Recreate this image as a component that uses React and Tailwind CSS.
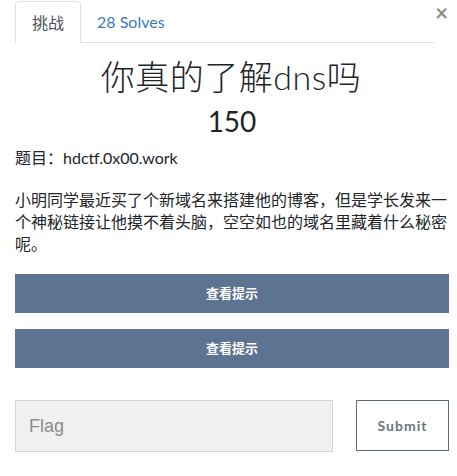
export default function App() {
  const font = { fontFamily: 'Lato, "Noto Sans CJK SC", sans-serif' };
  return (
    <div className="relative w-[457px] h-[476px] bg-white overflow-hidden text-[#212529]" style={font}>
      <button className="absolute right-[9px] top-[3px] text-[22px] leading-[20px] font-bold text-[#8a8a8a]">×</button>
      <div className="flex ml-[15px] mr-[22px] pt-[1px] border-b border-[#dee2e6] h-[43px]">
        <div className="px-[16px] h-[42px] flex items-center border border-b-0 border-[#dee2e6] rounded-t-[4px] bg-white text-[16px] text-[#495057] mb-[-1px]">
          挑战
        </div>
        <div className="px-[16px] h-[42px] flex items-center text-[16px] text-[#3a7bbf]">28 Solves</div>
      </div>
      <div className="pl-[15px] pr-[8px]">
        <h3 className="text-center text-[34px] leading-[38px] mt-[15px] pr-[2px] font-light tracking-[0.5px]">你真的了解dns吗</h3>
        <h4 className="text-center text-[28px] leading-[34px] mt-[8px]">150</h4>
        <p className="text-[16px] leading-[24px] mt-[8px]">题目：hdctf.0x00.work</p>
        <p className="text-[16px] leading-[22px] mt-[19px]">
          小明同学最近买了个新域名来搭建他的博客，但是学长发来一个神秘链接让他摸不着头脑，空空如也的域名里藏着什么秘密呢。
        </p>
        <div className="flex flex-col gap-[16px] mt-[19px]">
          <button className="h-[39px] w-full bg-[#5c7391] text-white text-[13px] font-bold">查看提示</button>
          <button className="h-[39px] w-full bg-[#5c7391] text-white text-[13px] font-bold">查看提示</button>
        </div>
        <div className="flex justify-between mt-[32px]">
          <input
            className="w-[318px] h-[52px] bg-[#f0f0f0] border border-[#d3d3d8] px-[13px] text-[18px] placeholder-[#8c8c8c] outline-none"
            placeholder="Flag"
            style={{ fontFamily: '"Liberation Sans", Arial, sans-serif' }}
          />
          <button className="w-[93px] h-[51px] border border-[#5f6b79] bg-white text-[#6c757d] text-[14px] font-bold tracking-[1px]">
            Submit
          </button>
        </div>
      </div>
    </div>
  );
}
